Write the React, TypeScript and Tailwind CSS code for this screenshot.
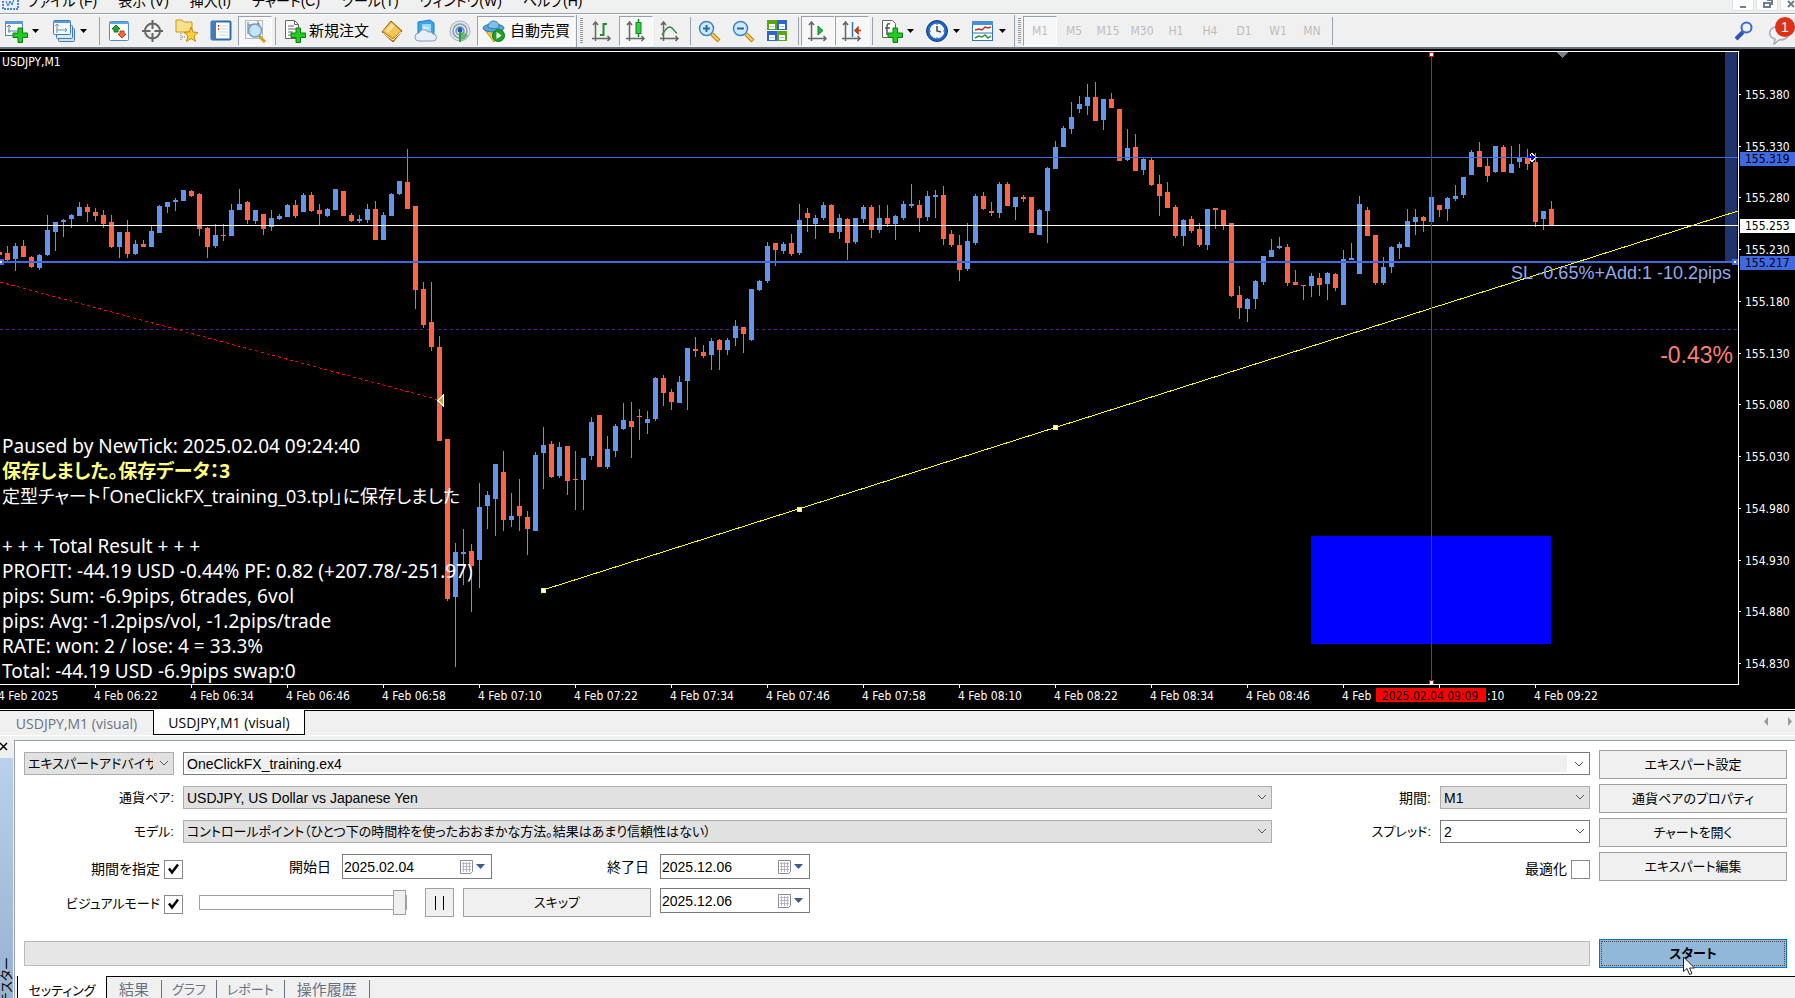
import { useState } from "react";
import type { ReactNode } from "react";

// [rising, high, low, body top, body bottom], one bar every 8px
const BARS: [number, number, number, number, number][] = [
  [0, 252, 255, 252, 255], [0, 246, 261, 253, 260], [1, 243, 271, 246, 259], [0, 240, 257, 246, 257],
  [0, 256, 268, 257, 267], [1, 254, 270, 255, 268], [1, 215, 256, 230, 255], [1, 222, 251, 222, 232],
  [1, 219, 237, 220, 222], [1, 214, 228, 215, 219], [1, 202, 216, 207, 216], [0, 204, 222, 207, 212],
  [0, 208, 221, 212, 216], [0, 210, 228, 215, 224], [0, 215, 248, 222, 247], [1, 232, 258, 232, 247],
  [0, 220, 258, 232, 254], [1, 240, 255, 244, 254], [0, 240, 247, 244, 247], [1, 226, 247, 231, 247],
  [1, 205, 233, 206, 233], [1, 202, 213, 202, 207], [1, 198, 211, 200, 202], [1, 190, 201, 190, 201],
  [0, 190, 197, 191, 196], [0, 193, 236, 194, 229], [0, 227, 258, 228, 247], [1, 224, 248, 235, 246],
  [0, 224, 241, 235, 236], [1, 204, 236, 210, 236], [1, 189, 210, 204, 210], [0, 201, 224, 202, 220],
  [1, 210, 224, 210, 221], [0, 214, 235, 214, 229], [1, 210, 231, 218, 227], [1, 214, 220, 216, 219],
  [1, 204, 217, 205, 217], [0, 200, 218, 205, 216], [1, 193, 212, 195, 212], [0, 192, 212, 195, 211],
  [0, 204, 225, 210, 214], [1, 208, 217, 209, 216], [1, 189, 210, 189, 210], [0, 191, 216, 191, 216],
  [0, 213, 222, 215, 221], [1, 215, 223, 219, 221], [1, 204, 223, 209, 220], [0, 201, 240, 209, 240],
  [1, 212, 240, 215, 240], [1, 193, 216, 194, 216], [1, 181, 195, 181, 194], [0, 149, 209, 182, 209],
  [0, 206, 309, 206, 290], [0, 282, 328, 289, 325], [0, 282, 351, 322, 347], [0, 336, 441, 347, 441],
  [0, 439, 601, 439, 599], [1, 543, 667, 552, 597], [1, 529, 585, 552, 554], [0, 544, 612, 551, 566],
  [1, 483, 588, 507, 560], [1, 491, 529, 495, 506], [1, 464, 536, 464, 499], [0, 451, 531, 472, 520],
  [1, 493, 527, 516, 520], [0, 479, 531, 506, 516], [0, 511, 555, 517, 529], [1, 452, 531, 455, 531],
  [1, 427, 489, 445, 453], [0, 441, 478, 444, 477], [1, 442, 478, 447, 476], [0, 446, 495, 446, 481],
  [0, 451, 510, 479, 480], [1, 458, 510, 458, 480], [1, 417, 460, 422, 456], [0, 415, 467, 415, 467],
  [1, 436, 469, 449, 467], [1, 424, 457, 426, 451], [1, 403, 430, 420, 429], [0, 402, 458, 421, 427],
  [0, 409, 440, 416, 417], [1, 411, 434, 419, 423], [1, 377, 421, 378, 419], [0, 375, 406, 378, 393],
  [0, 389, 410, 392, 402], [1, 376, 403, 382, 403], [1, 348, 410, 348, 381], [0, 337, 357, 349, 351],
  [0, 345, 358, 352, 356], [1, 338, 370, 341, 355], [0, 339, 370, 340, 350], [1, 338, 355, 340, 350],
  [1, 320, 346, 326, 338], [0, 327, 353, 327, 334], [1, 289, 341, 289, 340], [1, 280, 291, 281, 290],
  [1, 242, 283, 246, 281], [0, 243, 266, 243, 250], [1, 242, 254, 244, 251], [0, 234, 256, 243, 254],
  [1, 204, 255, 220, 253], [0, 208, 232, 213, 218], [1, 215, 239, 218, 224], [1, 202, 220, 205, 218],
  [0, 204, 233, 205, 233], [1, 214, 239, 218, 232], [0, 218, 260, 219, 243], [1, 218, 244, 218, 242],
  [1, 205, 223, 207, 219], [0, 205, 238, 207, 230], [1, 205, 233, 218, 230], [0, 205, 227, 218, 224],
  [1, 215, 240, 216, 224], [1, 201, 220, 204, 218], [1, 184, 208, 204, 206], [0, 200, 232, 205, 218],
  [1, 191, 221, 196, 217], [1, 190, 218, 195, 197], [0, 186, 245, 195, 239], [0, 230, 247, 234, 245],
  [0, 235, 281, 245, 270], [1, 223, 271, 241, 269], [1, 194, 245, 196, 243], [0, 192, 210, 196, 209],
  [0, 202, 216, 211, 213], [1, 182, 218, 184, 213], [0, 182, 206, 184, 206], [1, 197, 220, 197, 207],
  [0, 195, 202, 197, 199], [0, 197, 233, 197, 233], [1, 209, 235, 210, 235], [1, 167, 243, 168, 211],
  [1, 141, 169, 147, 169], [1, 126, 147, 128, 147], [1, 102, 134, 117, 129], [1, 96, 113, 104, 109],
  [1, 84, 115, 97, 106], [0, 82, 121, 97, 121], [1, 99, 130, 99, 120], [0, 93, 108, 99, 108],
  [0, 109, 161, 109, 161], [1, 129, 161, 148, 160], [0, 134, 171, 147, 171], [1, 158, 175, 159, 170],
  [0, 158, 186, 160, 185], [0, 175, 216, 184, 196], [0, 182, 208, 192, 208], [0, 205, 238, 207, 236],
  [1, 219, 246, 220, 236], [0, 216, 233, 219, 231], [0, 223, 247, 229, 245], [1, 209, 250, 209, 245],
  [0, 208, 229, 208, 210], [0, 210, 230, 210, 226], [0, 223, 297, 223, 296], [0, 286, 319, 295, 308],
  [1, 298, 322, 299, 309], [1, 280, 309, 281, 299], [1, 256, 285, 256, 282], [1, 239, 257, 250, 257],
  [1, 237, 249, 246, 248], [0, 244, 286, 247, 283], [0, 270, 285, 282, 285], [0, 285, 300, 285, 286],
  [1, 273, 297, 276, 286], [0, 273, 296, 278, 285], [1, 272, 300, 273, 284], [0, 273, 291, 274, 288],
  [1, 250, 305, 259, 305], [1, 243, 260, 258, 260], [1, 196, 274, 204, 274], [0, 207, 236, 210, 236],
  [0, 235, 285, 235, 283], [1, 257, 285, 267, 283], [1, 246, 273, 247, 267], [1, 242, 259, 244, 248],
  [1, 209, 247, 221, 247], [1, 209, 235, 217, 222], [0, 216, 232, 217, 221], [1, 197, 222, 197, 222],
  [0, 205, 217, 205, 210], [1, 197, 221, 198, 209], [1, 185, 201, 196, 199], [1, 177, 198, 177, 195],
  [1, 150, 175, 152, 175], [0, 142, 167, 151, 167], [0, 158, 182, 166, 176], [1, 146, 173, 146, 172],
  [0, 145, 172, 147, 172], [1, 146, 173, 164, 173], [1, 144, 168, 158, 162], [0, 149, 170, 158, 164],
  [0, 153, 227, 162, 222], [1, 211, 230, 211, 219], [0, 201, 225, 209, 225],
];

const PRICES = [
  "155.380", "155.330", "155.280", "155.230", "155.180", "155.130",
  "155.080", "155.030", "154.980", "154.930", "154.880", "154.830",
];

const TIMES = [
  "06:22", "06:34", "06:46", "06:58", "07:10", "07:22", "07:34", "07:46",
  "07:58", "08:10", "08:22", "08:34", "08:46", "", "", "09:22",
];

const MENUS = ["ファイル (F)", "表示 (V)", "挿入(I)", "チャート(C)", "ツール(T)", "ウィンドウ(W)", "ヘルプ(H)"];
const PERIODS = ["M1", "M5", "M15", "M30", "H1", "H4", "D1", "W1", "MN"];

/* ---------- toolbar icons ---------- */

function Icon({ children }: { children: ReactNode }) {
  return (
    <svg className="h-6 w-6 shrink-0" viewBox="0 0 24 24" fill="none" aria-hidden="true">
      {children}
    </svg>
  );
}

const Plus = () => (
  <path d="M14 9h4.500v5h5v4.500h-5v5H14v-5H9V14h5z" fill="#22cc22" stroke="#0a7d12" />
);

const NewChartIcon = () => (
  <Icon>
    <rect x="1.500" y="2.500" width="17" height="14" fill="#fff" stroke="#4a86c5" />
    <path d="M1 2h18v3H1z" fill="#5a9ad8" />
    <path d="M5 6v8M3 8l2-2 2 2M4 12h11" stroke="#4a7fb5" />
    <Plus />
  </Icon>
);

const ProfilesIcon = () => (
  <Icon>
    <rect x="6.500" y="9.500" width="16" height="13" rx="1" fill="#cfe3f5" stroke="#3f79b8" />
    <rect x="4.500" y="6.500" width="16" height="13" rx="1" fill="#dcebf8" stroke="#3f79b8" />
    <rect x="1.500" y="1.500" width="17" height="14" rx="1" fill="#f3f9fe" stroke="#3f79b8" />
    <path d="M1 2h18v2H1z" fill="#5a9ad8" />
    <path d="M5 5v9M3 7l2-2 2 2M4 11h11M13 9l2 2-2 2" stroke="#6d96bd" />
  </Icon>
);

const MarketIcon = () => (
  <Icon>
    <rect x="2.500" y="2.500" width="19" height="19" rx="1" fill="#fff" stroke="#4a90cf" />
    <path d="M2 3h20v2H2z" fill="#63a5de" />
    <path d="M9 6l4 4h-2v3H7v-3H5z" fill="#22a832" stroke="#0c7a1c" />
    <path d="M15 19l-4-4h2v-3h4v3h2z" fill="#ff6a3c" stroke="#c33a14" />
  </Icon>
);

const CrosshairIcon = () => (
  <Icon>
    <circle cx="11.500" cy="12" r="7.500" stroke="#666" strokeWidth="2" />
    <path d="M11.500 1v9M11.500 14v9M1 12h8.500M13.500 12H22" stroke="#666" strokeWidth="2" />
  </Icon>
);

const NavigatorIcon = () => (
  <Icon>
    <path d="M1 1h6l2 2h8v10H1z" fill="#f7e08a" stroke="#c99a25" />
    <path d="M6 14v8M7 18h3" stroke="#777" strokeDasharray="1 1" />
    <path d="M16 8l2 5 5 .5-4 3.500 1.500 5.500-4.500-3-4.500 3 1.500-5.500-4-3.500 5-.5z" fill="#ffcf3d" stroke="#c88a12" />
  </Icon>
);

const TerminalIcon = () => (
  <Icon>
    <rect x="2.500" y="2.500" width="19" height="18" rx="1" fill="#fff" stroke="#2a6db0" strokeWidth="2" />
    <path d="M2 2h5v19H2z" fill="#3f7dbd" />
    <path d="M10 7h9M10 10h9M10 13h9M10 16h9" stroke="#c9d6e4" />
    <path d="M9 7h1M9 10h1" stroke="#d33" strokeWidth="2" />
  </Icon>
);

const TesterIcon = () => (
  <Icon>
    <rect x="2.500" y="1.500" width="17" height="18" fill="#f4f4f4" stroke="#bbb" />
    <path d="M5 3v12M8 5v8M15 2v8M5 6h3M14 5h3" stroke="#777" />
    <path d="M16 17l6 6" stroke="#d99a1e" strokeWidth="3" />
    <circle cx="12" cy="11.500" r="6.500" fill="#bfe0f7" fillOpacity=".85" stroke="#6b9fc9" strokeWidth="1.500" />
  </Icon>
);

const OrderIcon = () => (
  <Icon>
    <path d="M3.500 1.500h9l4 4v14h-13z" fill="#fff" stroke="#666" />
    <path d="M12.500 1.500v4h4M6 7h6M6 10h8M6 13h5M6 16h3" stroke="#666" />
    <Plus />
  </Icon>
);

const BookIcon = () => (
  <Icon>
    <path d="M2 13L11 2l11 10-9 11z" fill="#c8861a" stroke="#8a5a0c" />
    <path d="M3 12l8-9 10 9-8 7z" fill="#f5c451" />
    <path d="M6 11l6-7 3 3-7 7z" fill="#ffe298" />
    <path d="M3 14l10 7 8-8" stroke="#fff3d0" />
  </Icon>
);

const CloudIcon = () => (
  <Icon>
    <path d="M4 3l12-2 4 3v12H4z" fill="#39a5ee" stroke="#1c7fca" />
    <path d="M8 5h9v8H8z" fill="#9bd6fb" />
    <path d="M10 7v5M10 9h5" stroke="#fff" />
    <path d="M5 22a4 4 0 010-8 5 5 0 019-1 4 4 0 015 2 3.500 3.500 0 010 7z" fill="#e8eef8" stroke="#8a99bf" />
  </Icon>
);

const SignalIcon = () => (
  <Icon>
    <circle cx="12" cy="12" r="10" fill="#dfe6ea" stroke="#a8b4ba" />
    <circle cx="12" cy="12" r="7" stroke="#8da0ab" strokeWidth="1.500" />
    <circle cx="12" cy="12" r="4" stroke="#6c91b0" strokeWidth="1.500" />
    <path d="M12 12v10a10 10 0 008-6z" fill="#4cae50" fillOpacity=".7" />
    <circle cx="12" cy="11" r="2.500" fill="#2458b8" />
    <path d="M12 13v10" stroke="#2f9e35" strokeWidth="2" />
  </Icon>
);

const AutoTradeIcon = () => (
  <Icon>
    <path d="M2 10l10 13 9-13z" fill="#f3c84a" stroke="#c28f1a" />
    <ellipse cx="11.500" cy="9" rx="10.500" ry="4" fill="#5aa5d8" stroke="#2f78ad" />
    <path d="M6 8c0-8 11-8 11 0 0 2-11 2-11 0z" fill="#7fc0ea" stroke="#2f78ad" />
    <circle cx="16.500" cy="16.500" r="6" fill="#1ba325" stroke="#0b7313" />
    <path d="M14.500 13v7l5-3.500z" fill="#fff" />
  </Icon>
);

const Axes = () => (
  <path d="M5.500 3v19M3 6l2.500-3L8 6M2 19.500h18M17.500 17l2.500 2.500-2.500 2.500" stroke="#666" strokeWidth="1.500" />
);

const BarChartIcon = () => (
  <Icon>
    <Axes />
    <path d="M13.500 4v13M13.500 5H17M10 16h3.500" stroke="#1d8f2a" strokeWidth="2" />
  </Icon>
);

const CandleChartIcon = () => (
  <Icon>
    <Axes />
    <path d="M14.500 0v18" stroke="#12831f" strokeWidth="1.500" />
    <rect x="12" y="3.500" width="5" height="11" fill="#2fd04a" stroke="#12831f" />
  </Icon>
);

const LineChartIcon = () => (
  <Icon>
    <Axes />
    <path d="M4 16c3-4 4-8 8-8 3 0 4 5 7 6" stroke="#2f8f3a" strokeWidth="1.500" />
  </Icon>
);

const ZoomIcon = ({ plus }: { plus?: boolean }) => (
  <Icon>
    <path d="M14 15l7 7" stroke="#b57c13" strokeWidth="4" />
    <path d="M14 15l6.500 6.500" stroke="#ffd44d" strokeWidth="2" />
    <circle cx="8.500" cy="9.500" r="7" fill="#cdeaff" stroke="#3b84c4" strokeWidth="1.500" />
    <path d={plus ? "M5 9.500h7M8.500 6v7" : "M5 9.500h7"} stroke="#2868a6" strokeWidth="2" />
  </Icon>
);

const TileIcon = () => (
  <Icon>
    <path d="M1 1h10v10H1zM11 12h10v10H11z" fill="#5aa614" />
    <path d="M11 1h10v10H11zM1 12h10v10H1z" fill="#2a66d4" />
    <path d="M3 5h6v5H3zM13 5h6v5h-6zM3 16h6v5H3zM13 16h6v5h-6z" fill="#fff" />
    <path d="M4 7.500h4M14 7.500h4M4 18.500h4M14 18.500h4" stroke="#a8c4e6" />
  </Icon>
);

const ScrollIcon = () => (
  <Icon>
    <Axes />
    <path d="M12 7v9l5-4.500z" fill="#27b53a" stroke="#11852a" />
  </Icon>
);

const ShiftIcon = () => (
  <Icon>
    <Axes />
    <path d="M12.500 3v15" stroke="#2f78ad" strokeWidth="1.500" />
    <path d="M21 11.500h-4M18 8.500l-3 3 3 3z" fill="#d64a1a" stroke="#c0390e" strokeWidth="1.500" />
  </Icon>
);

const IndicatorIcon = () => (
  <Icon>
    <path d="M3.500 1.500h10l3 3v14h-13z" fill="#fff" stroke="#666" />
    <path d="M11 5c-3-1-3 1-3 4v7M6 9h5" stroke="#555" strokeWidth="1.500" />
    <Plus />
  </Icon>
);

const ClockIcon = () => (
  <Icon>
    <circle cx="12" cy="12" r="9" fill="#f1f7fd" stroke="#1c65c4" strokeWidth="3" />
    <circle cx="12" cy="12" r="10.500" stroke="#0e3f8c" />
    <path d="M12 7v5l4 1M12 4.500v1M12 18.500v1M4.500 12h1M18.500 12h1" stroke="#444" strokeWidth="1.500" />
  </Icon>
);

const TemplateIcon = () => (
  <Icon>
    <rect x="1.500" y="2.500" width="20" height="19" fill="#fff" stroke="#2f74b8" />
    <path d="M1 2h21v4H1z" fill="#4a90d6" />
    <path d="M2 14h19" stroke="#2f74b8" />
    <path d="M4 11l4-1 3 1 3-3 3 1 3-1" stroke="#b3361b" strokeWidth="1.500" />
    <path d="M4 19l4-2 3 1 3-2 3 3 3-2" stroke="#2c8f3c" strokeWidth="1.500" />
  </Icon>
);

/* ---------- toolbar parts ---------- */

interface ToolProps {
  label: string;
  pressed?: boolean;
  children: ReactNode;
}

function Tool({ label, pressed, children }: ToolProps) {
  return (
    <button
      aria-label={label}
      className={`flex h-[30px] w-[34px] shrink-0 items-center justify-center border ${
        pressed ? "border-t-gray-400 border-l-gray-400 border-r-white border-b-white bg-[#f7f7f7]" : "border-transparent"
      }`}
    >
      {children}
    </button>
  );
}

function DropTool({ label, wide, children }: { label: string; wide?: boolean; children: ReactNode }) {
  return (
    <button aria-label={label} className={`flex shrink-0 items-center gap-1 pl-1 ${wide ? "w-[48px]" : "w-[46px]"}`}>
      {children}
      <svg className="h-1 w-[7px]" viewBox="0 0 7 4" aria-hidden="true">
        <path d="M0 0h7L3.500 4z" fill="#000" />
      </svg>
    </button>
  );
}

const Sep = () => (
  <div className="flex w-[6px] shrink-0 justify-center">
    <div className="h-7 w-px bg-gray-400" />
  </div>
);

const Grip = () => (
  <div className="flex w-[10px] shrink-0 gap-[3px] pl-px">
    <div className="h-8 w-px bg-gray-400" />
    <div className="my-[3px] w-[3px] bg-[repeating-linear-gradient(#9a9a9a_0_1px,#f0f0f0_1px_2px)]" />
  </div>
);

function Toolbar() {
  return (
    <div className="flex h-[33px] shrink-0 items-center border-t border-white bg-[#f0f0f0] text-[15px] text-black">
      <DropTool label="新規チャート" wide><NewChartIcon /></DropTool>
      <DropTool label="プロファイル" wide><ProfilesIcon /></DropTool>
      <Sep />
      <Tool label="気配値"><MarketIcon /></Tool>
      <Tool label="データウィンドウ"><CrosshairIcon /></Tool>
      <Tool label="ナビゲーター"><NavigatorIcon /></Tool>
      <Tool label="ターミナル"><TerminalIcon /></Tool>
      <Tool label="ストラテジーテスター" pressed><TesterIcon /></Tool>
      <Sep />
      <button className="flex w-[97px] shrink-0 items-center gap-[3px] pl-1 whitespace-nowrap">
        <OrderIcon />
        新規注文
      </button>
      <Tool label="MetaEditor"><BookIcon /></Tool>
      <Tool label="VPS"><CloudIcon /></Tool>
      <Tool label="シグナル"><SignalIcon /></Tool>
      <button className="flex h-[30px] w-[98px] shrink-0 items-center gap-1 border border-t-gray-400 border-r-white border-b-white border-l-gray-400 bg-[#f7f7f7] pl-1 whitespace-nowrap">
        <AutoTradeIcon />
        自動売買
      </button>
      <Grip />
      <Tool label="バーチャート"><BarChartIcon /></Tool>
      <Tool label="ローソク足" pressed><CandleChartIcon /></Tool>
      <Tool label="ラインチャート"><LineChartIcon /></Tool>
      <Sep />
      <Tool label="拡大"><ZoomIcon plus /></Tool>
      <Tool label="縮小"><ZoomIcon /></Tool>
      <Tool label="整列"><TileIcon /></Tool>
      <Sep />
      <Tool label="自動スクロール" pressed><ScrollIcon /></Tool>
      <Tool label="チャートシフト" pressed><ShiftIcon /></Tool>
      <Sep />
      <DropTool label="インディケータ"><IndicatorIcon /></DropTool>
      <DropTool label="時間足"><ClockIcon /></DropTool>
      <DropTool label="定型チャート"><TemplateIcon /></DropTool>
      <Grip />
      <div className="flex font-[DejaVu_Sans_Condensed,Noto_Sans,sans-serif] text-[12px] text-[#bdbdbd]">
        {PERIODS.map((p, i) => (
          <Tool key={p} label={p} pressed={i === 0}>{p}</Tool>
        ))}
      </div>
      <Sep />
      <div className="ml-auto flex items-center gap-3">
        <button aria-label="検索">
          <svg className="h-5 w-5" viewBox="0 0 20 20" fill="none">
            <path d="M9 11l-7 7" stroke="#2a56b8" strokeWidth="4" />
            <circle cx="12.500" cy="6.500" r="5" fill="#e9f1fd" stroke="#3d68c8" strokeWidth="2" />
          </svg>
        </button>
        <button aria-label="通知" className="relative h-7 w-[29px]">
          <svg className="h-7 w-6" viewBox="0 0 24 28" fill="none">
            <path d="M9 10c9-3 15 2 14 7-1 4-5 6-10 6l-5 4 1-5c-8-3-6-10 0-12z" fill="#f3f3f8" stroke="#a9a9b5" strokeWidth="1.500" />
          </svg>
          <span className="absolute top-0 right-0 flex h-5 w-5 items-center justify-center rounded-full bg-[#dd3014] font-[Liberation_Sans,sans-serif] text-[14px] text-white">
            1
          </span>
        </button>
      </div>
    </div>
  );
}

function MenuBar() {
  return (
    <div className="flex h-[14px] shrink-0 items-end overflow-hidden border-b border-gray-400 bg-[#f0f0f0]">
      <svg className="mb-[3px] ml-[2px] h-5 w-[17px] shrink-0" viewBox="0 0 17 20" fill="none" aria-hidden="true">
        <rect x="1" y="1" width="15" height="18" fill="#e6f0ff" stroke="#4a86e0" strokeWidth="2" strokeDasharray="2 1" />
        <path d="M4 11l2 5 2-5 2 4 2-6" stroke="#3c74d0" />
      </svg>
      <nav className="ml-2 flex h-[21px] items-start gap-[21px] text-[14px] leading-[18px] whitespace-nowrap text-black">
        {MENUS.map((m) => (
          <button key={m}>{m}</button>
        ))}
      </nav>
      <div className="mb-[2px] ml-auto flex h-5 gap-[2px]">
        {["M8 16h6", "M8 12h6v4H8zM11 9h5v5", "M8 10l6 6M14 10l-6 6"].map((d, i) => (
          <button key={d} aria-label={["最小化", "元に戻す", "閉じる"][i]} className={i === 2 ? "w-[15px] overflow-hidden" : "w-[22px]"}>
            <svg width="22" height="20" viewBox="0 0 22 20" fill="none">
              <rect x=".5" y=".5" width="21" height="19" fill="#fdfdfd" stroke="#e2e2e2" />
              <path d={d} stroke="#6d7f93" strokeWidth="2" />
            </svg>
          </button>
        ))}
      </div>
    </div>
  );
}

/* ---------- chart ---------- */

function Handle({ x, y, color }: { x: number; y: number; color: string }) {
  return (
    <>
      <rect x={x - 2} y={y - 2} width="5" height="5" fill={color} />
      <rect x={x - 1} y={y - 1} width="3" height="3" fill="#fff" />
    </>
  );
}

function Plot() {
  return (
    <svg className="block h-[632px] w-full" shapeRendering="crispEdges" role="img" aria-label="USDJPY M1">
      <g transform="translate(0 -52)">
        <rect x="1311" y="536" width="240" height="108" fill="#0000ff" />
        <rect x="1725" y="52" width="12" height="210" fill="#20336b" />
        <path d="M1557 52h11l-5.500 6z" fill="#708090" />
        <line x1="0" y1="329.500" x2="100%" y2="329.500" stroke="#5b2090" strokeDasharray="3 3" />
        {BARS.map(([up, high, low, top, bottom], i) => {
          const x = i * 8 - 1;
          const fill = up ? "#6495ed" : "#ff6347";
          return (
            <g key={i} fill={fill}>
              <rect x={x} y={high} width="1" height={low - high} />
              <rect x={x - 2} y={top} width="5" height={bottom - top} />
            </g>
          );
        })}
        <rect x="0" y="157" width="100%" height="1" fill="#4169e1" />
        <rect x="0" y="225" width="100%" height="1" fill="#fff" />
        <rect x="0" y="261" width="100%" height="2" fill="#4169e1" />
        <rect x="-2" y="259" width="6" height="6" fill="#4169e1" />
        <rect x="0" y="261" width="2" height="2" fill="#fff" />
        <rect x="1732" y="259" width="6" height="6" fill="#4169e1" />
        <rect x="1734" y="261" width="2" height="2" fill="#fff" />
        <line x1="0" y1="282" x2="439" y2="400" stroke="#ff0000" strokeDasharray="3 3" />
        <path d="M438 400.500l5-5v10z" fill="#daa520" stroke="#fff" />
        <line x1="543" y1="590" x2="1738" y2="211" stroke="#ffff00" />
        <Handle x={543} y={590} color="#ffff00" />
        <Handle x={799} y={509} color="#ffff00" />
        <Handle x={1055} y={427} color="#ffff00" />
        <rect x="1431" y="52" width="1" height="632" fill="#ff0000" />
        <Handle x={1431} y={54} color="#ff0000" />
        <Handle x={1431} y={682} color="#ff0000" />
        <path d="M1532 153.500l2 2v1l2 1-2 1v1l-2 2-2-2v-5z" fill="#0000ff" stroke="#fff" />
        <path d="M1528 157h7M1532 155v5" stroke="#0000ff" strokeWidth="2" />
      </g>
    </svg>
  );
}

function TimeAxis() {
  return (
    <svg className="block h-6 w-full text-[12px]">
      {TIMES.map((t, i) => (
        <g key={i} fill="#fff">
          <rect x={95 + i * 96} y="0" width="1" height="3" />
          {t && <text x={94 + i * 96} y="15">4 Feb {t}</text>}
        </g>
      ))}
      {/* labels on either side of the cursor time */}
      <text x="-2" y="15" fill="#fff">4 Feb 2025</text>
      <text x="1342" y="15" fill="#fff">4 Feb</text>
      <text x="1487" y="15" fill="#fff">:10</text>
      <rect x="1376" y="3" width="110" height="14" fill="#ff0000" />
      <text x="1382" y="15" fill="#000">2025.02.04 09:09</text>
    </svg>
  );
}

function PriceTag({ y, value, fill }: { y: number; value: string; fill: string }) {
  return (
    <>
      <rect x="1" y={y} width="56" height="14" fill={fill} />
      <text x="6" y={y + 11} fill="#000">{value}</text>
    </>
  );
}

function PriceAxis() {
  return (
    <svg className="block w-14 shrink-0 text-[12px]">
      <g transform="translate(0 -51)">
        {PRICES.map((p, i) => {
          const y = Math.round(94 + i * 51.73);
          return (
            <g key={p} fill="#fff">
              <rect x="0" y={y} width="2" height="1" />
              <text x="6" y={y + 5}>{p}</text>
            </g>
          );
        })}
        <PriceTag y={152} value="155.319" fill="#4169e1" />
        <PriceTag y={219} value="155.253" fill="#fff" />
        <PriceTag y={256} value="155.217" fill="#4169e1" />
      </g>
    </svg>
  );
}

function Chart() {
  return (
    <div className="flex shrink-0 border-t-2 border-gray-500 bg-black pt-[2px] font-[DejaVu_Sans_Condensed,Noto_Sans,sans-serif]">
      <div className="min-w-0 flex-1">
        <div className="relative overflow-hidden border-t border-r border-b border-white">
          <Plot />
          <div className="absolute top-[2px] left-[2px] text-[12px] leading-4 text-white">USDJPY,M1</div>
          <div className="absolute bottom-0 left-[2px] font-[Noto_Sans,Noto_Sans_CJK_JP,sans-serif] text-[19px] leading-[25px] whitespace-nowrap text-white">
            <p>Paused by NewTick: 2025.02.04 09:24:40</p>
            <p className="font-bold text-[#ffff80]">保存しました。保存データ：3</p>
            <p className="text-[18px]">定型チャート「OneClickFX_training_03.tpl」に保存しました</p>
            <p>&nbsp;</p>
            <p>+ + + Total Result + + +</p>
            <p>PROFIT: -44.19 USD -0.44% PF: 0.82 (+207.78/-251.97)</p>
            <p>pips: Sum: -6.9pips, 6trades, 6vol</p>
            <p>pips: Avg: -1.2pips/vol, -1.2pips/trade</p>
            <p>RATE: won: 2 / lose: 4 = 33.3%</p>
            <p>Total: -44.19 USD -6.9pips swap:0</p>
          </div>
          <div className="absolute top-[209px] right-[7px] font-[Liberation_Sans,sans-serif] text-[18px] leading-6 text-[#93a9ea]">
            SL -0.65%+Add:1 -10.2pips
          </div>
          <div className="absolute top-[289px] right-[5px] font-[Liberation_Sans,sans-serif] text-[23px] leading-7 text-[#fa8072]">
            -0.43%
          </div>
        </div>
        <TimeAxis />
      </div>
      <PriceAxis />
    </div>
  );
}

function ChartTabs() {
  return (
    <div className="shrink-0 border-t border-white bg-[#f0f0f0]">
      <div className="flex h-[26px] items-start border-t border-b border-t-black border-b-white font-[Open_Sans,sans-serif] text-[14px]">
        <button className="h-6 w-[153px] text-gray-500">USDJPY,M1 (visual)</button>
        <button className="-mt-px h-[25px] w-[152px] border-r border-b border-l border-black bg-white text-black">
          USDJPY,M1 (visual)
        </button>
        <svg className="mt-[6px] mr-[3px] ml-auto h-[9px] w-7" viewBox="0 0 28 9" aria-hidden="true">
          <path d="M4 0v9L0 4.500zM24 0v9l4-4.500z" fill="#999" />
        </svg>
      </div>
    </div>
  );
}

/* ---------- strategy tester ---------- */

interface ComboProps {
  id: string;
  value: string;
  label?: string;
  className: string;
  light?: boolean;
}

function Combo({ id, value, label, className, light }: ComboProps) {
  return (
    <div className={`relative h-[23px] ${className}`}>
      <select
        id={id}
        aria-label={label}
        className={`block h-full w-full appearance-none rounded-none border pr-5 pl-[3px] ${
          light ? "border-[#7a7a7a] bg-white" : "border-[#adadad] bg-[#e1e1e1]"
        }`}
      >
        <option>{value}</option>
      </select>
      <svg className="pointer-events-none absolute top-2 right-[5px] h-[6px] w-[10px]" viewBox="0 0 10 6" fill="none" aria-hidden="true">
        <path d="M1 1l4 4 4-4" stroke="#555" />
      </svg>
    </div>
  );
}

function Check({ id, initial }: { id: string; initial: boolean }) {
  const [checked, setChecked] = useState(initial);
  return (
    <span className="grid h-[19px] w-[19px] shrink-0">
      <input
        id={id}
        type="checkbox"
        checked={checked}
        onChange={() => setChecked(!checked)}
        className="col-start-1 row-start-1 appearance-none border border-[#8a8a8a] bg-white"
      />
      {checked && (
        <svg className="pointer-events-none col-start-1 row-start-1 h-[19px] w-[19px]" viewBox="0 0 19 19" fill="none">
          <path d="M5 8.500l3 4 6-8" stroke="#000" strokeWidth="2.500" />
        </svg>
      )}
    </span>
  );
}

function DateBox({ id, value, label }: { id: string; value: string; label?: string }) {
  return (
    <div className="flex h-[25px] w-[150px] shrink-0 items-center border border-[#7a7a7a] bg-white pr-[6px]">
      <input id={id} aria-label={label} defaultValue={value} className="w-0 flex-1 pl-px" />
      <button aria-label="カレンダー">
        <svg className="h-4 w-[26px]" viewBox="0 0 26 16" fill="none">
          <path d="M1.500 1.500h12v11l-2 2h-10z" fill="#fff" stroke="#8a8a9a" />
          <path d="M4.500 3v10M7.500 3v10M10.500 3v10M3 4.500h9M3 7.500h9M3 10.500h9" stroke="#b5b5c5" />
          <path d="M17 5h9l-4.500 5z" fill="#3d5a91" />
        </svg>
      </button>
    </div>
  );
}

const sideButton = "h-[29px] border border-[#a0a0a0] bg-[#f0f0f0]";

function TesterForm() {
  return (
    <div className="grid flex-1 grid-cols-[1fr_188px] gap-x-[9px] bg-white pt-[9px] pr-2 pb-2 pl-[9px] text-[14px] leading-5 text-black">
      <div className="flex min-w-0 flex-col gap-[11px] pt-[2px]">
        <div className="flex gap-[9px]">
          <Combo id="kind" label="種類" value="エキスパートアドバイザ" className="w-[150px] shrink-0 text-[13px]" />
          <div className="relative flex h-[23px] flex-1 border border-[#7a7a7a] bg-white p-[2px] pr-[22px]">
            <input aria-label="エキスパート" defaultValue="OneClickFX_training.ex4" className="w-full bg-[#f0f0f0] pl-px" />
            <svg className="pointer-events-none absolute top-2 right-[5px] h-[6px] w-[10px]" viewBox="0 0 10 6" fill="none" aria-hidden="true">
              <path d="M1 1l4 4 4-4" stroke="#555" />
            </svg>
          </div>
        </div>
        <div className="flex items-center gap-[9px]">
          <label htmlFor="symbol" className="w-[150px] text-right text-[13px]">通貨ペア:</label>
          <Combo id="symbol" value="USDJPY, US Dollar vs Japanese Yen" className="flex-1" />
          <label htmlFor="period" className="w-[150px] text-right">期間:</label>
          <Combo id="period" value="M1" className="w-[150px]" />
        </div>
        <div className="flex items-center gap-[9px]">
          <label htmlFor="model" className="w-[150px] text-right text-[13px]">モデル:</label>
          <Combo
            id="model"
            value="コントロールポイント（ひとつ下の時間枠を使ったおおまかな方法。結果はあまり信頼性はない）"
            className="flex-1 text-[13px]"
          />
          <label htmlFor="spread" className="w-[150px] text-right text-[13px]">スプレッド:</label>
          <Combo id="spread" value="2" light className="w-[150px]" />
        </div>
        <div className="flex h-[25px] items-end">
          <div className="flex w-[159px] items-center justify-end gap-1">
            <label htmlFor="useDate">期間を指定</label>
            <Check id="useDate" initial />
          </div>
          <label htmlFor="from" className="w-[159px] self-center pr-[11px] text-right">開始日</label>
          <DateBox id="from" value="2025.02.04" />
          <label htmlFor="to" className="w-[168px] self-center pr-[11px] text-right">終了日</label>
          <DateBox id="to" value="2025.12.06" />
          <div className="ml-auto flex items-center gap-1">
            <label htmlFor="optimize">最適化</label>
            <Check id="optimize" initial={false} />
          </div>
        </div>
        <div className="-mt-[2px] flex h-[29px] items-start">
          <div className="mt-[6px] flex w-[159px] items-center justify-end gap-1 text-[13px]">
            <label htmlFor="visual">ビジュアルモード</label>
            <Check id="visual" initial />
          </div>
          <input
            type="range"
            aria-label="速度"
            min={0}
            max={32}
            defaultValue={32}
            className="mr-[18px] ml-4 h-[29px] w-[208px] appearance-none bg-transparent [&::-webkit-slider-runnable-track]:h-[15px] [&::-webkit-slider-runnable-track]:border [&::-webkit-slider-runnable-track]:border-[#a0a0a0] [&::-webkit-slider-runnable-track]:bg-white [&::-webkit-slider-thumb]:-mt-[6px] [&::-webkit-slider-thumb]:h-[25px] [&::-webkit-slider-thumb]:w-[13px] [&::-webkit-slider-thumb]:appearance-none [&::-webkit-slider-thumb]:border [&::-webkit-slider-thumb]:border-[#a0a0a0] [&::-webkit-slider-thumb]:bg-[#f0f0f0]"
          />
          <button aria-label="一時停止" className={`${sideButton} mr-[9px] flex w-[29px] items-center justify-center gap-[7px]`}>
            <span className="h-[14px] w-px bg-black" />
            <span className="h-[14px] w-px bg-black" />
          </button>
          <button className={`${sideButton} mr-[9px] w-[188px] text-[13px]`}>スキップ</button>
          <DateBox id="skipTo" label="スキップ先" value="2025.12.06" />
        </div>
        <div role="progressbar" aria-label="進捗" className="mt-[13px] h-[25px] border border-[#bcbcbc] bg-[#e6e6e6]" />
      </div>
      <div className="flex flex-col gap-[5px] text-[13px]">
        <button className={sideButton}>エキスパート設定</button>
        <button className={sideButton}>通貨ペアのプロパティ</button>
        <button className={sideButton}>チャートを開く</button>
        <button className={sideButton}>エキスパート編集</button>
        <button className="relative mt-[53px] h-[29px] border border-[#0078d7] bg-[#91b7d9] p-px font-bold">
          <span className="flex h-full items-center justify-center border border-dotted border-[#5a4632]">スタート</span>
          <svg className="absolute top-4 left-[83px] h-[19px] w-3" viewBox="0 0 12 19" aria-hidden="true">
            <path d="M.5 1v14.500l3.500-3 2.500 6 2.500-1-2.500-5.500h5z" fill="#fff" stroke="#222" />
          </svg>
        </button>
      </div>
    </div>
  );
}

function TesterTabs() {
  return (
    <div className="flex h-[30px] shrink-0 pl-[2px] text-[15px] leading-6">
      <button className="w-[90px] border-r border-l border-black bg-white text-[13px] text-black">セッティング</button>
      <div className="flex flex-1 items-start border-t border-black text-gray-500">
        <button className="mt-[3px] h-5 border-r border-gray-500 px-3 leading-5">結果</button>
        <button className="mt-[3px] h-5 border-r border-gray-500 px-[10px] text-[13px] leading-5">グラフ</button>
        <button className="mt-[3px] h-5 border-r border-gray-500 px-[10px] text-[13px] leading-5">レポート</button>
        <button className="mt-[3px] h-5 border-r border-gray-500 px-3 leading-5">操作履歴</button>
      </div>
    </div>
  );
}

function Tester() {
  return (
    <div className="flex flex-1 pt-1">
      <div className="flex w-[14px] shrink-0 flex-col">
        <button aria-label="閉じる" className="flex h-[18px] items-start pt-[2px]">
          <svg className="h-[9px] w-2" viewBox="0 0 8 9" fill="none">
            <path d="M0 1l7 7M7 1L0 8" stroke="#000" strokeWidth="1.500" />
          </svg>
        </button>
        <div className="h-[262px] w-[13px] overflow-hidden bg-linear-to-b from-[#b9d1ea] to-[#94afce] pt-[199px]">
          <div className="rotate-180 text-[13px] leading-[13px] text-black [text-orientation:sideways] [writing-mode:vertical-rl]">テスター</div>
        </div>
      </div>
      <div className="flex min-w-0 flex-1 flex-col border-t border-l border-gray-400">
        <div className="flex">
          <TesterForm />
        </div>
        <TesterTabs />
      </div>
    </div>
  );
}

export default function App() {
  return (
    <div className="flex h-screen flex-col overflow-hidden bg-[#f0f0f0] font-[Liberation_Sans,Noto_Sans_CJK_JP,sans-serif] [font-feature-settings:'palt']">
      <MenuBar />
      <Toolbar />
      <Chart />
      <ChartTabs />
      <Tester />
    </div>
  );
}
